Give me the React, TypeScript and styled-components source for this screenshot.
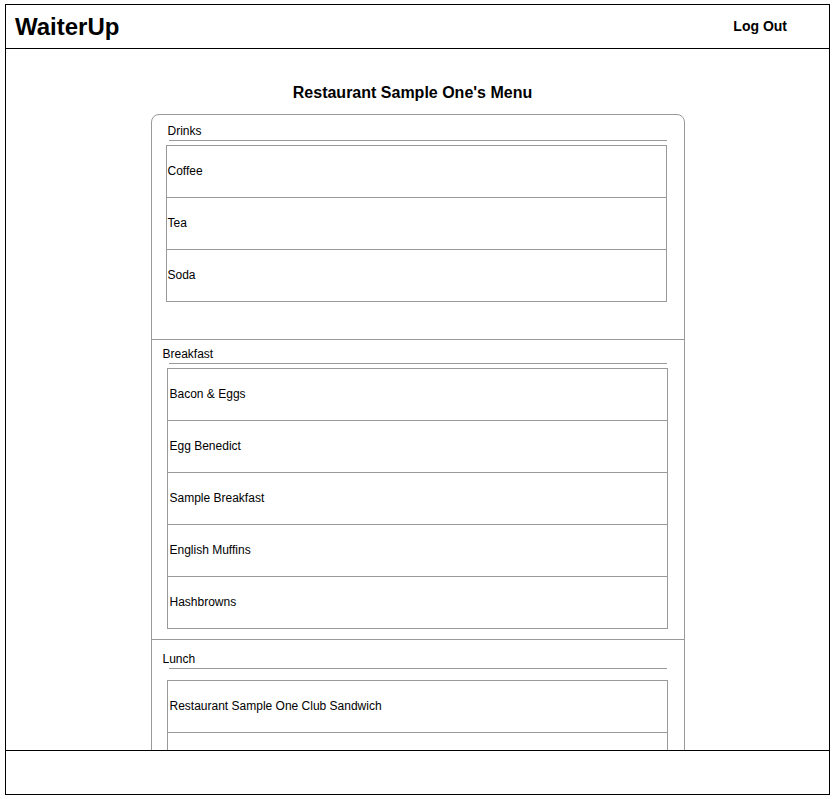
import React from "react";
import styled, { createGlobalStyle } from "styled-components";

type MenuSection = {
  name: string;
  items: string[];
  padTop: number;
  padBottom: number;
  labelLeft: number;
  boxLeft: number;
  boxGap: number;
  itemPad: number;
  divider: boolean;
};

const sections: MenuSection[] = [
  {
    name: "Drinks",
    items: ["Coffee", "Tea", "Soda"],
    padTop: 9,
    padBottom: 37,
    labelLeft: 16,
    boxLeft: 14,
    boxGap: 4,
    itemPad: 1,
    divider: true,
  },
  {
    name: "Breakfast",
    items: [
      "Bacon & Eggs",
      "Egg Benedict",
      "Sample Breakfast",
      "English Muffins",
      "Hashbrowns",
    ],
    padTop: 7,
    padBottom: 10,
    labelLeft: 11,
    boxLeft: 15,
    boxGap: 4,
    itemPad: 2,
    divider: true,
  },
  {
    name: "Lunch",
    items: ["Restaurant Sample One Club Sandwich", ""],
    padTop: 12,
    padBottom: 10,
    labelLeft: 11,
    boxLeft: 15,
    boxGap: 11,
    itemPad: 2,
    divider: false,
  },
];

export default function App() {
  return (
    <>
      <GlobalStyle />
      <Frame>
        <Header>
          <Brand>WaiterUp</Brand>
          <LogOut>Log Out</LogOut>
        </Header>
        <Main>
          <Title>Restaurant Sample One's Menu</Title>
          <MenuCard>
            {sections.map((section) => (
              <Section
                key={section.name}
                $padTop={section.padTop}
                $padBottom={section.padBottom}
                $divider={section.divider}
              >
                <SectionLabel $left={section.labelLeft}>{section.name}</SectionLabel>
                <SectionRule />
                <ItemList $left={section.boxLeft} $gap={section.boxGap}>
                  {section.items.map((item, i) => (
                    <Item key={i} $pad={section.itemPad}>
                      {item}
                    </Item>
                  ))}
                </ItemList>
              </Section>
            ))}
          </MenuCard>
        </Main>
        <Footer />
      </Frame>
    </>
  );
}

const GlobalStyle = createGlobalStyle`
  html, body {
    margin: 0;
    padding: 0;
    background: #fff;
  }
  body {
    font-family: "Liberation Sans", Arial, Helvetica, sans-serif;
    color: #000;
  }
`;

const Frame = styled.div`
  margin: 4px 5px 0;
  height: 791px;
  box-sizing: border-box;
  border: 1px solid #000;
  display: flex;
  flex-direction: column;
`;

const Header = styled.header`
  height: 43px;
  flex: 0 0 43px;
  border-bottom: 1px solid #000;
  display: flex;
  align-items: center;
  justify-content: space-between;
  padding: 0 42px 0 9px;
`;

const Brand = styled.h1`
  margin: 0;
  font-size: 24px;
  font-weight: 700;
  line-height: 28px;
`;

const LogOut = styled.a`
  font-size: 14px;
  font-weight: 700;
  line-height: 16px;
  padding-bottom: 2px;
  cursor: pointer;
`;

const Main = styled.main`
  flex: 0 0 701px;
  height: 701px;
  overflow: hidden;
  padding-top: 34px;
  box-sizing: border-box;
`;

const Title = styled.h2`
  margin: 0 0 12px;
  padding-right: 10px;
  font-size: 16px;
  font-weight: 700;
  line-height: 19px;
  text-align: center;
`;

const MenuCard = styled.div`
  width: 534px;
  margin: 0 auto;
  box-sizing: border-box;
  border: 1px solid #999;
  border-radius: 8px;
`;

const Section = styled.section<{ $padTop: number; $padBottom: number; $divider: boolean }>`
  padding: ${(p) => p.$padTop}px 0 ${(p) => p.$padBottom}px;
  border-bottom: ${(p) => (p.$divider ? "1px solid #999" : "none")};
`;

const SectionLabel = styled.div<{ $left: number }>`
  margin-left: ${(p) => p.$left}px;
  margin-bottom: 2px;
  font-size: 12px;
  line-height: 14px;
`;

const SectionRule = styled.div`
  height: 1px;
  margin: 0 17px;
  background: #999;
`;

const ItemList = styled.ul<{ $left: number; $gap: number }>`
  list-style: none;
  margin: ${(p) => p.$gap}px 0 0 ${(p) => p.$left}px;
  padding: 0;
  width: 501px;
  box-sizing: border-box;
  border: 1px solid #999;
`;

const Item = styled.li<{ $pad: number }>`
  height: 49px;
  display: flex;
  align-items: center;
  padding: 0 0 2px ${(p) => p.$pad}px;
  font-size: 12px;
  border-bottom: 1px solid #999;

  &:last-child {
    border-bottom: none;
  }
`;

const Footer = styled.footer`
  flex: 0 0 43px;
  border-top: 1px solid #000;
`;
